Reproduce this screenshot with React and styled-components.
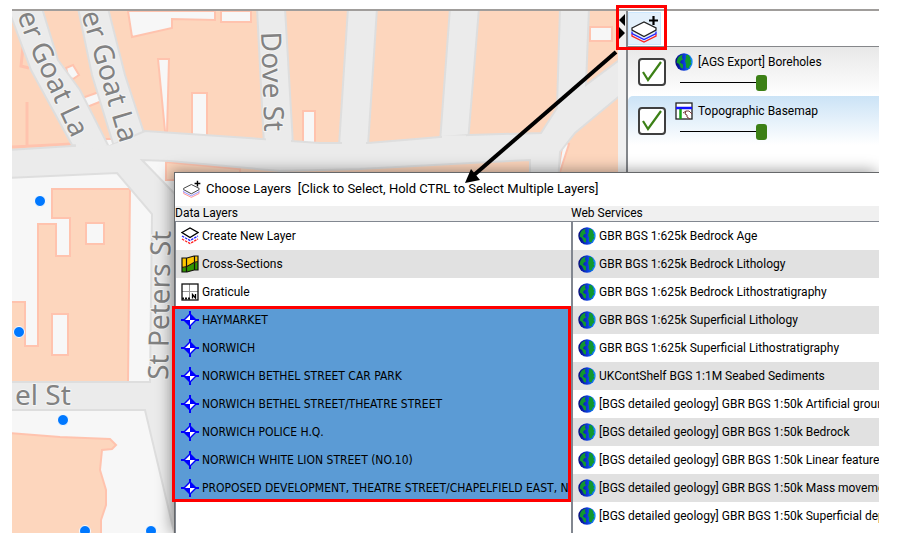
import React from "react";
import styled, { createGlobalStyle } from "styled-components";

const GlobalStyle = createGlobalStyle`
  * { box-sizing: border-box; }
  body { margin: 0; background: #fff; color: #000; font: 12px/16px Roboto, "Noto Sans", sans-serif; }
  button, input { font: inherit; color: inherit; margin: 0; }
  h1, h2, ul { margin: 0; padding: 0; font: inherit; }
  ul { list-style: none; }
  svg { display: block; flex: none; }
`;

const Page = styled.main`
  height: 100vh;
  padding: 9px 18px 16px 12px;
`;

const Workspace = styled.div`
  position: relative;
  height: 100%;
  display: grid;
  grid-template-columns: 1fr 8px 253px;
  border-top: 2px solid #a09d9b;
`;

const MapPane = styled.section`
  min-width: 0;
  overflow: hidden;
`;

const MapDrawing = styled.svg`
  width: 100%;
  height: 100%;
`;

const Splitter = styled.div`
  background: #f0f0f0;
`;

const Sidebar = styled.aside`
  border-left: 2px solid #83868a;
  background: #fff;
`;

const Toolbar = styled.div`
  height: 36px;
  padding: 1px 0;
  border-bottom: 1px solid #85878a;
`;

const ToolButton = styled.button`
  display: grid;
  place-items: center;
  width: 33px;
  height: 33px;
  padding: 0;
  border: 1px solid #cce8ff;
  background: #e3f0fb;
`;

const LayerCard = styled.div`
  display: grid;
  grid-template-columns: 28px 1fr;
  column-gap: 9px;
  height: 49px;
  padding: 2px 0 0 10px;
  border-radius: 5px 0 0 0;
  background: linear-gradient(${(p) => (p.$active ? "#cbe3f6" : "#e8e8e8")}, #fff);
`;

const Tick = styled.label`
  display: grid;
  align-self: center;
  place-items: center;
  padding-bottom: 2px;
  > * { grid-area: 1 / 1; }
  svg { pointer-events: none; }
`;

const TickBox = styled.input`
  appearance: none;
  width: 28px;
  height: 28px;
  border: 2px solid #3f3f3f;
  border-radius: 4px;
  background: #fff;
  & + svg { visibility: hidden; }
  &:checked + svg { visibility: visible; }
`;

const LayerBody = styled.div`
  display: flex;
  flex-direction: column;
`;

const LayerName = styled.div`
  display: flex;
  align-items: center;
  gap: 5px;
  height: 24px;
  padding-top: 2px;
  white-space: nowrap;
`;

const Opacity = styled.input`
  appearance: none;
  width: 87px;
  height: 17px;
  margin: 1px 0 0 5px;
  background: linear-gradient(#000, #000) center / 100% 1px no-repeat;
  &::-webkit-slider-thumb {
    appearance: none;
    width: 11px;
    height: 16px;
    border-radius: 3px;
    background: #3c8016;
  }
`;

const Dialog = styled.section`
  position: absolute;
  inset: 161px 0 0 162px;
  display: grid;
  grid-template-rows: 33px 1fr;
  border: solid #66686a;
  border-width: 1px 0 0 1px;
  background: #fff;
  box-shadow: -3px -1px 14px rgba(0, 0, 0, 0.4);
  clip-path: inset(-20px 0 0 -20px);
`;

const DialogTitle = styled.h1`
  display: flex;
  align-items: center;
  gap: 5px;
  padding: 0 0 2px 8px;
  font-size: 13px;
  line-height: 20px;
  white-space: pre;
`;

const Columns = styled.div`
  display: grid;
  grid-template-columns: 9fr 7fr;
  min-height: 0;
`;

const Column = styled.div`
  display: flex;
  flex-direction: column;
  min-width: 0;
  min-height: 0;
`;

const ColumnTitle = styled.h2`
  height: 15px;
  background: #f0f0f0;
  line-height: 14px;
`;

const LayerList = styled.ul`
  flex: 1;
  min-height: 0;
  overflow: ${(p) => (p.$divided ? "hidden" : "visible")};
  border: solid #828790;
  border-width: 1px 0 0 ${(p) => (p.$divided ? "2px" : "1px")};
`;

const LayerItem = styled.li`
  background: #fff;
  &:nth-child(even) { background: #e1e1e1; }
`;

const LayerOption = styled.button`
  display: flex;
  align-items: center;
  gap: 3px;
  width: 100%;
  height: 28px;
  padding: 0 0 0 5px;
  overflow: hidden;
  border: 0;
  background: transparent;
  white-space: nowrap;
  &[aria-pressed="true"] { background: #5b9bd5; }
`;

const SelectionGroup = styled.li`
  margin-left: -4px;
  outline: 3px solid #f00;
  outline-offset: -3px;
  font-family: "DejaVu Sans Condensed", "DejaVu Sans", sans-serif;
  ul { padding-left: 4px; background: #5b9bd5; }
`;

const ButtonCallout = styled.div`
  position: absolute;
  top: -6px;
  right: 212px;
  width: 51px;
  height: 45px;
  border: 3px solid #f00;
  pointer-events: none;
`;

const CalloutArrow = styled.svg`
  position: absolute;
  top: 39px;
  right: 259px;
  pointer-events: none;
`;

const SplitArrows = styled.svg`
  margin-top: 3px;
`;

function StackIcon({ size = 18, plus = false, pale = false }) {
  const blue = pale ? "#7d7dff" : "#2020ff";
  const red = pale ? "#ff8080" : "#ff2020";
  return plus ? (
    <svg width={size} height={size} viewBox="0 0 28 28" fill="none" strokeWidth="1.3">
      <path d="M1 19v2l12 6l12-6v-2" stroke={red} />
      <path d="M1 16.500v2l12 6l12-6v-2" stroke={blue} />
      <path d="M1 13L13 7l12 6v2L13 21.500L1 15z" fill="#fff" stroke="#222" />
      <path d="M22.500 1v9M18 5.500h9" stroke="#000" strokeWidth="2.200" />
    </svg>
  ) : (
    <svg width={size} height={size} viewBox="0 0 18 18" fill="none" strokeWidth="1.300">
      <path d="M1 12l8 4.500L17 12" stroke={red} strokeDasharray="2.500 1" />
      <path d="M1 9l8 4.500L17 9" stroke={blue} strokeDasharray="2.500 1" />
      <path d="M1 5.500L9 1l8 4.500L9 10.500z" fill="#fff" stroke="#000" />
    </svg>
  );
}

function SectionIcon() {
  return (
    <svg width="18" height="18" viewBox="0 0 18 18">
      <path d="M1 3h5l7-2h4v14h-4l-7 2H1z" fill="#ffc800" />
      <path d="M1 13l5-1l7-4l4-1v8h-4l-7 2H1z" fill="#329600" />
      <path d="M1 3h5l7-2h4v14h-4l-7 2H1zM5.500 3v14M13.500 1v14M1 12.500l5-1l7-4l4-1" fill="none" stroke="#111" strokeWidth="1.200" />
    </svg>
  );
}

function GraticuleIcon() {
  return (
    <svg width="18" height="18" viewBox="0 0 18 18" fill="none">
      <rect x="1" y="1" width="16" height="16" fill="#fff" />
      <path d="M8.500 1v16M1 8.500h16" stroke="#999" />
      <rect x="1" y="1" width="16" height="16" stroke="#111" strokeWidth="1.300" />
      <path d="M1 15.500h8" stroke="#111" strokeWidth="2" strokeDasharray="2 1" />
      <rect x="10" y="10" width="6" height="6" fill="#fff" />
      <path d="M11.500 15.500v-4l3 3.500v-4" stroke="#000" strokeWidth="1.300" />
    </svg>
  );
}

function BoreholeIcon() {
  return (
    <svg width="18" height="18" viewBox="0 0 18 18">
      <path d="M9 0v18M0 9h18" stroke="#00f" strokeWidth="2" />
      <path d="M9 2L16 9L9 16L2 9z" fill="#00f" />
      <path d="M9 4V9H4zM9 9h5L9 14z" fill="#fff" />
    </svg>
  );
}

function GlobeIcon() {
  return (
    <svg width="18" height="18" viewBox="0 0 18 18">
      <defs>
        <linearGradient id="ocean">
          <stop offset="0" stopColor="#06067e" />
          <stop offset="0.500" stopColor="#0c38d8" />
          <stop offset="1" stopColor="#1492ff" />
        </linearGradient>
      </defs>
      <circle cx="9" cy="9" r="8.700" fill="url(#ocean)" />
      <path d="M4 3.500l3.500-2l-0.500 3l1 2l-2 1l-1 2l3 2v4l-2-0.500l-2-4l-2.500-1.500l1-4z" fill="#10982f" />
      <path d="M11 2l2.500 0l2 3l-0.500 1l1.500 2l-1 1l1 2l-2 2l-1 2.500l-2.500-1v-3.500l-1-3l1-3z" fill="#10982f" />
    </svg>
  );
}

function BasemapIcon() {
  return (
    <svg width="18" height="18" viewBox="0 0 18 18" fill="none">
      <rect x="1" y="1" width="16" height="16" fill="#fff" stroke="#222" strokeWidth="1.300" />
      <path d="M1 6h16" stroke="#1212ff" strokeWidth="2.500" />
      <path d="M5.500 7v10" stroke="#18a018" strokeWidth="2.500" />
      <path d="M8 11l3-2h3l3 3M11 9l-1 3l2 1v2l3 2" stroke="#7b3a3a" />
    </svg>
  );
}

const icons = {
  stack: StackIcon,
  section: SectionIcon,
  graticule: GraticuleIcon,
  borehole: BoreholeIcon,
  globe: GlobeIcon,
  basemap: BasemapIcon,
};

const mapLayers = [
  { name: "[AGS Export] Boreholes", icon: "globe" },
  { name: "Topographic Basemap", icon: "basemap", active: true },
];

const tools = [
  { name: "Create New Layer", icon: "stack" },
  { name: "Cross-Sections", icon: "section" },
  { name: "Graticule", icon: "graticule" },
];

const sites = [
  "HAYMARKET",
  "NORWICH",
  "NORWICH BETHEL STREET CAR PARK",
  "NORWICH BETHEL STREET/THEATRE STREET",
  "NORWICH POLICE H.Q.",
  "NORWICH WHITE LION STREET (NO.10)",
  "PROPOSED DEVELOPMENT, THEATRE STREET/CHAPELFIELD EAST, NORWICH",
];

const services = [
  "GBR BGS 1:625k Bedrock Age",
  "GBR BGS 1:625k Bedrock Lithology",
  "GBR BGS 1:625k Bedrock Lithostratigraphy",
  "GBR BGS 1:625k Superficial Lithology",
  "GBR BGS 1:625k Superficial Lithostratigraphy",
  "UKContShelf BGS 1:1M Seabed Sediments",
  "[BGS detailed geology] GBR BGS 1:50k Artificial ground",
  "[BGS detailed geology] GBR BGS 1:50k Bedrock",
  "[BGS detailed geology] GBR BGS 1:50k Linear features",
  "[BGS detailed geology] GBR BGS 1:50k Mass movement",
  "[BGS detailed geology] GBR BGS 1:50k Superficial deposits",
];

const boreholes = [[40, 201], [19, 332], [63, 420], [85, 531], [151, 531]];

function StreetMap() {
  return (
    <MapDrawing viewBox="12 11 606 522" preserveAspectRatio="xMinYMin slice" role="img" aria-label="Street map">
      <rect x="12" y="11" width="606" height="522" fill="#fdd6bd" />
      <g fill="#f7f7f7">
        <path d="M12 150H174V533H12z" />
        <g stroke="#ffc3ae" strokeWidth="2">
          <path d="M128 11L132 37L172 28V19L215 20V11zM221 11V22H251V11z" />
          <path d="M158 59H169L167 133L165 131zM192 93H207V137L192 135zM303 111H315V143H303z" />
          <path d="M66 68L73 65L79 75L73 79L68 76zM82 98L102 91V101L87 107zM104 139H117V147H106z" />
          <path d="M590 27H612V41H590zM563 141L569 144L560 172H558z" />
        </g>
      </g>
      <path d="M23 47L21 66L29 68M27 102V147M12 147L72 144" fill="none" stroke="#ffc3ae" strokeWidth="3" />
      <g fill="#fdd6bd" stroke="#ffc3ae" strokeWidth="2">
        <path d="M166 162L240 169V180H166z" />
        <path d="M52 189H130L128 382H8V302H25V346H38V224H56V256H70V218H52z" />
        <path d="M8 433L60 437L110 439L116 445L112 449L102 450L100 470L106 490L106 505L101 520V536H8z" />
        <g fill="#f7f7f7"><path d="M86 223H104V244H86zM52 314H68V355H52z" /></g>
      </g>
      <g fill="#ebebeb" stroke="#dedede" strokeWidth="2">
        <path d="M8 8L31 70L72 145L110 149L80 90L58 60L42 8zM78 8L92 75L115 150L146 150L143 130L125 75L108 8z" />
        <path d="M257 8L264 145L293 145L285 8zM348 8L339 146H368L377 8zM450 8L440 142H468L479 8z" />
        <path d="M560 8L557 108L541 133L469 135L440 137L368 143H320L145 131L110 146L72 146L8 150V178L117 173L152 214L150 382H8V410H145L175 536H200V220L142 160L170 161L280 171L360 169L470 163L530 160V200H557L560 152L575 133L622 94V58L586 85L589 8z" />
      </g>
      <g fill="none" stroke="#ebebeb" strokeWidth="5">
        <path d="M76 145L110 148L142 137M266 140H291M342 142H366M442 138H466" />
      </g>
      <g fontFamily="Noto Sans, Open Sans, sans-serif" fontSize="28" fill="#828282" stroke="#f4f4f4" strokeWidth="2" paintOrder="stroke">
        <path id="goatWest" d="M17 15L29 47L72 138L90 175" fill="none" stroke="none" />
        <path id="goatEast" d="M81 14L92 49L119 140L129 175" fill="none" stroke="none" />
        <text><textPath href="#goatWest">er Goat La</textPath></text>
        <text><textPath href="#goatEast">er Goat La</textPath></text>
        <text transform="translate(261 32) rotate(88)">Dove St</text>
        <text transform="translate(168 380) rotate(-89)">St Peters St</text>
        <text x="15" y="405">el St</text>
      </g>
      <g fill="#0078ff" stroke="#fff" strokeWidth="1">
        {boreholes.map(([x, y]) => <circle key={y + "-" + x} cx={x} cy={y} r="5.500" />)}
      </g>
    </MapDrawing>
  );
}

function MapLayer({ name, icon, active }) {
  const Icon = icons[icon];
  return (
    <LayerCard $active={active}>
      <Tick>
        <TickBox type="checkbox" defaultChecked aria-label={"Show " + name} />
        <svg width="28" height="28" viewBox="0 0 28 28" fill="none">
          <path d="M5 14L10 22L23 4" stroke="#3c8016" strokeWidth="2.200" />
        </svg>
      </Tick>
      <LayerBody>
        <LayerName><Icon />{name}</LayerName>
        <Opacity type="range" min="0" max="100" defaultValue="100" aria-label={"Opacity of " + name} />
      </LayerBody>
    </LayerCard>
  );
}

function Choice({ name, icon, initial = false }) {
  const [selected, setSelected] = React.useState(initial);
  const Icon = icons[icon];
  return (
    <LayerItem>
      <LayerOption type="button" aria-pressed={selected} onClick={() => setSelected(!selected)}>
        <Icon />
        {name}
      </LayerOption>
    </LayerItem>
  );
}

export default function App() {
  return (
    <Page>
      <GlobalStyle />
      <Workspace>
        <MapPane><StreetMap /></MapPane>
        <Splitter>
          <SplitArrows width="8" height="26" viewBox="0 0 8 26">
            <path d="M7 0V12L1 6zM1 13V25L7 19z" />
          </SplitArrows>
        </Splitter>
        <Sidebar>
          <Toolbar>
            <ToolButton type="button" aria-label="Add layers"><StackIcon size={28} plus /></ToolButton>
          </Toolbar>
          {mapLayers.map((layer) => <MapLayer key={layer.name} {...layer} />)}
        </Sidebar>
        <Dialog role="dialog" aria-labelledby="dialog-title">
          <DialogTitle id="dialog-title">
            <StackIcon size={18} plus pale />
            {"Choose Layers  [Click to Select, Hold CTRL to Select Multiple Layers]"}
          </DialogTitle>
          <Columns>
            <Column>
              <ColumnTitle>Data Layers</ColumnTitle>
              <LayerList>
                {tools.map((item) => <Choice key={item.name} {...item} />)}
                <SelectionGroup>
                  <ul>{sites.map((name) => <Choice key={name} name={name} icon="borehole" initial />)}</ul>
                </SelectionGroup>
              </LayerList>
            </Column>
            <Column>
              <ColumnTitle>Web Services</ColumnTitle>
              <LayerList $divided>
                {services.map((name) => <Choice key={name} name={name} icon="globe" />)}
              </LayerList>
            </Column>
          </Columns>
        </Dialog>
        <ButtonCallout />
        <CalloutArrow width="158" height="136" viewBox="0 0 158 136">
          <path d="M154 2L12 125" stroke="#000" strokeWidth="4" />
          <path d="M3 133L9 119L18 130z" />
        </CalloutArrow>
      </Workspace>
    </Page>
  );
}
